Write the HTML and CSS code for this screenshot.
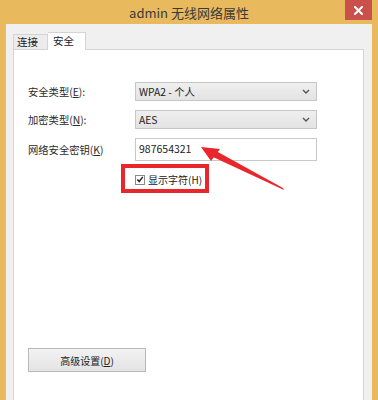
FILE: index.html
```html
<!DOCTYPE html>
<html lang="zh">
<head>
<meta charset="utf-8">
<link rel="stylesheet" href="styles.css">
</head>
<body>
<div class="window">
  <div class="titlebar">
    <span></span>
    <div class="title">admin 无线网络属性</div>
    <div class="close">
      <svg width="9" height="9" viewBox="0 0 9 9"><path d="M1 1L8 8M8 1L1 8" stroke="#fff" stroke-width="2" stroke-linecap="square"/></svg>
    </div>
  </div>
  <div class="client">
    <div class="tabs">
      <div class="tab">连接</div>
      <div class="tab active">安全</div>
    </div>
    <div class="panel">
      <div class="form">
        <label class="lbl">安全类型(<u>E</u>):</label>
        <div class="select"><span>WPA2 - 个人</span>
          <svg width="8" height="5" viewBox="0 0 8 5"><path d="M1 1L4 4L7 1" fill="none" stroke="#555" stroke-width="1.4"/></svg>
        </div>
        <label class="lbl">加密类型(<u>N</u>):</label>
        <div class="select"><span>AES</span>
          <svg width="8" height="5" viewBox="0 0 8 5"><path d="M1 1L4 4L7 1" fill="none" stroke="#555" stroke-width="1.4"/></svg>
        </div>
        <label class="lbl">网络安全密钥(<u>K</u>)</label>
        <div class="input">987654321</div>
        <span></span>
        <div class="check-row">
          <span class="checkbox"><svg width="9" height="9" viewBox="0 0 9 9"><path d="M1.5 4.5L3.6 6.8L7.6 1.6" fill="none" stroke="#222" stroke-width="1.6"/></svg></span>
          <span>显示字符(H)</span>
        </div>
      </div>
      <div class="adv">高级设置(<u>D</u>)</div>
    </div>
  </div>
  <svg class="annot" width="378" height="400" viewBox="0 0 378 400">
    <rect x="123" y="166" width="84" height="25" fill="none" stroke="#e8262b" stroke-width="4"/>
    <polygon points="283,188 284,190 213,157 216,151" fill="#e8262b"/>
    <polygon points="201,147 220,149 211,161" fill="#e8262b"/>
  </svg>
</div>
</body>
</html>
```

FILE: styles.css
```css
* { box-sizing: border-box; }
html, body { margin: 0; padding: 0; }
body {
  font-family: "Noto Sans CJK SC", "Noto Sans", sans-serif;
  background: #e9b95e;
}
.window {
  position: relative;
  width: 378px;
  height: 400px;
  overflow: hidden;
  background: #e9b95e;
}
.titlebar {
  height: 24px;
  display: grid;
  grid-template-columns: 1fr auto 1fr;
}
.title {
  font-size: 13px;
  line-height: 26px;
  color: #3a3a3a;
}
.close {
  justify-self: end;
  align-self: start;
  margin-right: 6px;
  width: 27px;
  height: 20px;
  background: #c9504b;
  display: flex;
  align-items: center;
  justify-content: center;
}
.client {
  margin: 0 6px;
  height: 376px;
  overflow: hidden;
  background: #f0f0f0;
  padding: 8px 8px 0 7px;
}
.tabs {
  display: flex;
  align-items: flex-end;
  height: 17px;
  position: relative;
  z-index: 1;
}
.tab {
  font-size: 10.5px;
  color: #222;
  height: 15px;
  line-height: 14px;
  padding: 0 3px;
  width: 35px;
  border: 1px solid #d4d4d4;
  border-bottom: none;
  background: #ececec;
}
.tab.active {
  height: 18px;
  margin-bottom: -1px;
  width: 38px;
  background: #fff;
  border-left: none;
  padding-left: 5px;
  line-height: 16px;
}
.panel {
  height: 400px;
  background: #fff;
  border: 1px solid #d4d4d4;
  padding: 32px 0 0 14px;
}
.form {
  display: grid;
  grid-template-columns: 107px 182px;
  grid-template-rows: 19px 19px 23px 19px;
  row-gap: 9px;
  align-items: center;
  font-size: 10px;
  color: #222;
}
.lbl { font-size: 10.3px; color: #2a2a2a; }
.select {
  height: 19px;
  border: 1px solid #c6c6c6;
  background: linear-gradient(#efefef, #e3e3e3);
  display: flex;
  align-items: center;
  justify-content: space-between;
  padding: 0 6px 0 3px;
  font-size: 10.3px;
}
.input {
  height: 23px;
  border: 1px solid #c9c9c9;
  background: #fff;
  padding: 0 3px;
  display: flex;
  align-items: center;
  font-size: 10.5px;
  padding-bottom: 2px;
}
.check-row {
  display: flex;
  align-items: center;
  gap: 3px;
  font-size: 10px;
}
.checkbox {
  width: 10px;
  height: 10px;
  border: 1px solid #8a8a8a;
  background: #fff;
  display: flex;
  align-items: center;
  justify-content: center;
}
.checkbox svg { display: block; }
.adv {
  margin-top: 159px;
  width: 118px;
  height: 24px;
  border: 1px solid #b8b8b8;
  background: linear-gradient(#f2f2f2, #e4e4e4);
  font-size: 10px;
  color: #222;
  display: flex;
  align-items: center;
  justify-content: center;
}
.annot {
  position: absolute;
  left: 0;
  top: 0;
  pointer-events: none;
}
```
